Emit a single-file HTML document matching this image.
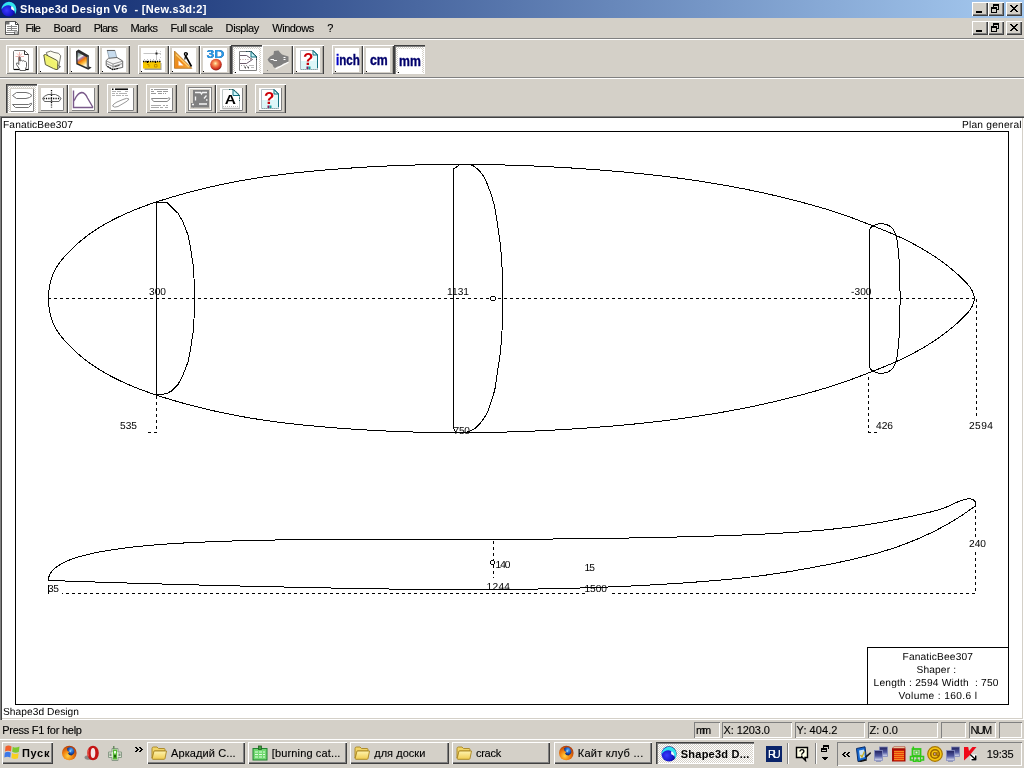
<!DOCTYPE html>
<html lang="en"><head><meta charset="utf-8"><title>Shape3d Design V6 - [New.s3d:2]</title>
<style>
html,body{margin:0;padding:0;background:#d4d0c8;}
body{width:1024px;height:768px;overflow:hidden;font-family:'Liberation Sans',sans-serif;font-size:11px;color:#000;}
#screen{will-change:transform;position:relative;width:1024px;height:768px;overflow:hidden;background:#d4d0c8;}
#screen div,#screen span,#screen svg{position:absolute;box-sizing:border-box;}
.t{white-space:pre;line-height:1;}
.rb{background:#d4d0c8;box-shadow:inset 1px 1px 0 #fff,inset -1px -1px 0 #404040,inset -2px -2px 0 #808080;}
.pb{background:#e9e7e3;box-shadow:inset 1px 1px 0 #404040,inset 2px 2px 0 #808080,inset -1px -1px 0 #fff;}
.dith{background-image:linear-gradient(45deg,#fff 25%,transparent 25%,transparent 75%,#fff 75%),linear-gradient(45deg,#fff 25%,transparent 25%,transparent 75%,#fff 75%);background-size:2px 2px;background-position:0 0,1px 1px;background-color:#d4d0c8;}
.tb{background:#d4d0c8;box-shadow:inset 1px 1px 0 #fff,inset -1px 0 0 #404040,inset 0 -1px 0 #808080,inset -2px 0 0 #a8a59e;}
.sunk{box-shadow:inset 1px 1px 0 #808080,inset -1px -1px 0 #fff;}
.cap{background:#d4d0c8;box-shadow:inset 1px 1px 0 #fff,inset -1px -1px 0 #404040,inset -2px -2px 0 #808080;}
.cl{text-rendering:geometricPrecision;}
.rg{-webkit-text-stroke:0.12px currentColor;}

</style></head>
<body>
<div id="screen">
<div style="left:0px;top:116px;width:1024px;height:604px;background:#fff;box-shadow:inset 1px 1px 0 #808080,inset 2px 2px 0 #404040,inset -1px -1px 0 #fff,inset -2px -2px 0 #d4d0c8;"></div><svg width="1024" height="768" viewBox="0 0 1024 768" style="left:0;top:0" shape-rendering="crispEdges" fill="none" stroke="#000" stroke-width="1"><line x1="48" y1="298.5" x2="976" y2="298.5" stroke-dasharray="3 3"/><line x1="156.5" y1="396" x2="156.5" y2="433" stroke-dasharray="3 3"/><line x1="148" y1="432.5" x2="157" y2="432.5" stroke-dasharray="3 3"/><line x1="868.5" y1="377" x2="868.5" y2="433" stroke-dasharray="3 3"/><line x1="868" y1="432.5" x2="878" y2="432.5" stroke-dasharray="3 3"/><line x1="976.5" y1="299" x2="976.5" y2="418" stroke-dasharray="3 3"/><line x1="48" y1="593.5" x2="976" y2="593.5" stroke-dasharray="3 3"/><line x1="975.5" y1="504" x2="975.5" y2="594" stroke-dasharray="3 3"/><line x1="493.5" y1="541" x2="493.5" y2="578" stroke-dasharray="3 3"/></svg><span class="t cl" style="left:3px;top:121.00px;font-size:10.2px;letter-spacing:0.12px;">FanaticBee307</span><span class="t cl" style="left:962px;top:121.00px;font-size:10.2px;letter-spacing:0.21px;">Plan general</span><span class="t cl" style="left:3px;top:708.00px;font-size:10.2px;letter-spacing:0.05px;">Shape3d Design</span><span class="t cl" style="left:149px;top:288.00px;font-size:10.2px;background:#fff;padding:1px 3px 0 0;margin-top:-1px;height:10px;">300</span><span class="t cl" style="left:447px;top:288.00px;font-size:10.2px;letter-spacing:0.03px;background:#fff;padding:1px 3px 0 0;margin-top:-1px;height:10px;">1131</span><span class="t cl" style="left:851px;top:288.00px;font-size:10.2px;letter-spacing:0.04px;background:#fff;padding:1px 3px 0 0;margin-top:-1px;height:10px;">-300</span><span class="t cl" style="left:120px;top:422.00px;font-size:10.2px;background:#fff;padding:1px 3px 0 0;margin-top:-1px;height:10px;">535</span><span class="t cl" style="left:453.5px;top:427.00px;font-size:10.2px;letter-spacing:-0.25px;background:#fff;padding:1px 3px 0 0;margin-top:-1px;height:10px;">750</span><span class="t cl" style="left:876px;top:422.00px;font-size:10.2px;background:#fff;padding:1px 3px 0 0;margin-top:-1px;height:10px;">426</span><span class="t cl" style="left:969px;top:422.00px;font-size:10.2px;letter-spacing:0.44px;background:#fff;padding:1px 3px 0 0;margin-top:-1px;height:10px;">2594</span><span class="t cl" style="left:48px;top:585.00px;font-size:10.2px;letter-spacing:-0.34px;background:#fff;padding:1px 3px 0 0;margin-top:-1px;height:10px;">35</span><span class="t cl" style="left:495.5px;top:561.00px;font-size:10.2px;letter-spacing:-1px;background:#fff;padding:1px 3px 0 0;margin-top:-1px;height:10px;">140</span><span class="t cl" style="left:486.5px;top:583.00px;font-size:10.2px;letter-spacing:0.28px;background:#fff;padding:1px 3px 0 0;margin-top:-1px;height:10px;">1244</span><span class="t cl" style="left:584.5px;top:564.00px;font-size:10.2px;letter-spacing:-0.84px;background:#fff;padding:1px 3px 0 0;margin-top:-1px;height:10px;">15</span><span class="t cl" style="left:584.5px;top:585.00px;font-size:10.2px;letter-spacing:-0.06px;background:#fff;padding:1px 3px 0 0;margin-top:-1px;height:10px;">1500</span><span class="t cl" style="left:969px;top:540.00px;font-size:10.2px;background:#fff;padding:1px 3px 0 0;margin-top:-1px;height:10px;">240</span><span class="t cl" style="left:902.5px;top:653.00px;font-size:10.2px;letter-spacing:0.16px;">FanaticBee307</span><span class="t cl" style="left:916.5px;top:666.00px;font-size:10.2px;letter-spacing:0.14px;">Shaper :</span><span class="t cl" style="left:873.5px;top:679.00px;font-size:10.2px;letter-spacing:0.22px;">Length : 2594 Width  : 750</span><span class="t cl" style="left:898.5px;top:692.00px;font-size:10.2px;letter-spacing:0.36px;">Volume : 160.6 l</span><svg width="1024" height="768" viewBox="0 0 1024 768" style="left:0;top:0" shape-rendering="crispEdges" fill="none" stroke="#000" stroke-width="1"><rect x="15.500" y="131.500" width="993" height="573"/><path d="M867.500 704.500V647.500H1008.500"/><path d="M48.50 298.53L48.50 298.43L48.50 298.14L48.50 297.64L48.51 296.95L48.54 296.07L48.58 294.98L48.65 293.70L48.77 292.23L48.93 290.56L49.17 288.71L49.48 286.67L49.91 284.46L50.45 282.08L51.15 279.55L52.02 276.87L53.10 274.08L54.41 271.19L55.99 268.23L57.86 265.22L60.02 262.17L62.47 259.09L65.17 255.96L68.09 252.79L71.22 249.58L74.57 246.34L78.15 243.10L81.96 239.89L86.00 236.70L90.28 233.55L94.79 230.44L99.54 227.40L104.53 224.42L109.74 221.51L115.18 218.68L120.83 215.92L126.70 213.26L132.76 210.67L139.01 208.18L145.44 205.76L152.06 203.43L158.85 201.16L165.80 198.96L172.91 196.80L180.16 194.70L187.57 192.66L195.12 190.68L202.81 188.76L210.63 186.91L218.60 185.13L226.69 183.43L234.91 181.80L243.25 180.26L251.71 178.81L260.29 177.44L268.98 176.17L277.77 174.99L286.66 173.89L295.65 172.87L304.72 171.92L313.88 171.03L323.13 170.20L332.44 169.42L341.83 168.69L351.28 168.02L360.80 167.40L370.38 166.83L380.01 166.33L389.69 165.88L399.42 165.49L409.19 165.16L419.00 164.89L428.85 164.67L438.72 164.52L448.62 164.43L458.54 164.39L468.48 164.42L478.44 164.50L488.40 164.64L498.37 164.84L508.34 165.10L518.30 165.41L528.26 165.78L538.21 166.20L548.14 166.68L558.05 167.20L567.93 167.78L577.79 168.41L587.62 169.08L597.41 169.81L607.16 170.58L616.86 171.40L626.52 172.28L636.12 173.21L645.66 174.20L655.14 175.24L664.55 176.35L673.89 177.52L683.15 178.76L692.34 180.05L701.44 181.42L710.45 182.84L719.37 184.33L728.20 185.89L736.92 187.51L745.54 189.19L754.05 190.93L762.45 192.73L770.73 194.58L778.89 196.48L786.93 198.44L794.84 200.44L802.62 202.48L810.26 204.57L817.77 206.70L825.14 208.86L832.36 211.09L839.42 213.38L846.32 215.77L853.05 218.22L859.62 220.71L866.04 223.19L872.30 225.62L878.41 228.02L884.36 230.41L890.15 232.82L895.76 235.27L901.18 237.76L906.43 240.29L911.48 242.86L916.34 245.45L920.99 248.06L925.45 250.68L929.70 253.30L933.76 255.91L937.61 258.52L941.26 261.10L944.71 263.65L947.97 266.17L951.04 268.63L953.91 271.04L956.61 273.39L959.12 275.66L961.45 277.85L963.61 279.96L965.59 281.97L967.36 283.91L968.89 285.77L970.20 287.56L971.29 289.26L972.17 290.86L972.86 292.35L973.39 293.71L973.78 294.94L974.06 296.00L974.25 296.89L974.37 297.60L974.45 298.11L974.49 298.43L974.50 298.53"/><path d="M48.50 298.53L48.50 298.63L48.50 298.92L48.50 299.42L48.51 300.11L48.54 300.99L48.58 302.08L48.65 303.36L48.77 304.83L48.93 306.50L49.17 308.35L49.48 310.39L49.91 312.60L50.45 314.98L51.15 317.51L52.02 320.19L53.10 322.98L54.41 325.87L55.99 328.83L57.86 331.84L60.02 334.89L62.47 337.97L65.17 341.10L68.09 344.27L71.22 347.48L74.57 350.72L78.15 353.96L81.96 357.17L86.00 360.36L90.28 363.51L94.79 366.62L99.54 369.66L104.53 372.64L109.74 375.55L115.18 378.38L120.83 381.14L126.70 383.80L132.76 386.39L139.01 388.88L145.44 391.30L152.06 393.63L158.85 395.90L165.80 398.10L172.91 400.26L180.16 402.36L187.57 404.40L195.12 406.38L202.81 408.30L210.63 410.15L218.60 411.93L226.69 413.63L234.91 415.26L243.25 416.80L251.71 418.25L260.29 419.62L268.98 420.89L277.77 422.07L286.66 423.17L295.65 424.19L304.72 425.14L313.88 426.03L323.13 426.86L332.44 427.64L341.83 428.37L351.28 429.04L360.80 429.66L370.38 430.23L380.01 430.73L389.69 431.18L399.42 431.57L409.19 431.90L419.00 432.17L428.85 432.39L438.72 432.54L448.62 432.63L458.54 432.67L468.48 432.64L478.44 432.56L488.40 432.42L498.37 432.22L508.34 431.96L518.30 431.65L528.26 431.28L538.21 430.86L548.14 430.38L558.05 429.86L567.93 429.28L577.79 428.65L587.62 427.98L597.41 427.25L607.16 426.48L616.86 425.66L626.52 424.78L636.12 423.85L645.66 422.86L655.14 421.82L664.55 420.71L673.89 419.54L683.15 418.30L692.34 417.01L701.44 415.64L710.45 414.22L719.37 412.73L728.20 411.17L736.92 409.55L745.54 407.87L754.05 406.13L762.45 404.33L770.73 402.48L778.89 400.58L786.93 398.62L794.84 396.62L802.62 394.58L810.26 392.49L817.77 390.36L825.14 388.20L832.36 385.97L839.42 383.68L846.32 381.29L853.05 378.84L859.62 376.35L866.04 373.87L872.30 371.44L878.41 369.04L884.36 366.65L890.15 364.24L895.76 361.79L901.18 359.30L906.43 356.77L911.48 354.20L916.34 351.61L920.99 349.00L925.45 346.38L929.70 343.76L933.76 341.15L937.61 338.54L941.26 335.96L944.71 333.41L947.97 330.89L951.04 328.43L953.91 326.02L956.61 323.67L959.12 321.40L961.45 319.21L963.61 317.10L965.59 315.09L967.36 313.15L968.89 311.29L970.20 309.50L971.29 307.80L972.17 306.20L972.86 304.71L973.39 303.35L973.78 302.12L974.06 301.06L974.25 300.17L974.37 299.46L974.45 298.95L974.49 298.63L974.50 298.53"/><line x1="156.5" y1="202" x2="156.5" y2="395"/><line x1="453.5" y1="169" x2="453.5" y2="428"/><line x1="869.5" y1="229" x2="869.5" y2="368"/><path d="M156.50 202.53L166.80 202.53L178.00 213.23L183.00 222.03L188.00 235.03L190.50 247.53L193.00 264.03L194.00 278.03L194.50 298.53"/><path d="M156.50 394.53L162.50 394.33L167.00 393.43L172.00 390.73L178.00 384.53L183.00 375.03L188.00 362.03L190.50 349.53L193.00 333.03L194.00 319.03L194.50 298.53"/><path d="M453.50 169.03L459.80 164.63L471.00 164.83L474.50 166.53L478.50 169.83L482.50 174.53L485.50 179.53L488.00 186.03L491.00 194.03L494.50 205.53L497.00 221.03L499.80 240.03L501.50 257.03L502.30 272.03L502.60 298.53"/><path d="M502.60 298.53L502.30 325.03L501.50 340.03L499.80 357.03L497.00 375.03L494.80 390.03L491.00 402.03L487.20 413.03L483.50 419.03L479.80 423.83L474.80 428.63L469.80 431.23L465.00 432.43"/><path d="M453.500 427.500L455.500 432.400"/><path d="M869.50 229.53L869.58 229.39L869.85 228.98L870.32 228.34L871.03 227.52L872.05 226.60L873.41 225.66L875.15 224.80L877.27 224.12L879.76 223.74L882.53 223.75L885.47 224.25L888.41 225.33L891.09 227.05L893.29 229.44L894.96 232.45L896.15 235.97L896.98 239.84L897.57 243.89L898.05 247.93L898.45 251.93L898.78 255.86L899.04 259.71L899.25 263.46L899.42 267.11L899.55 270.64L899.65 274.04L899.72 277.29L899.79 280.38L899.85 283.29L899.90 286.00L899.95 288.49L899.99 290.74L900.04 292.75L900.08 294.47L900.12 295.91L900.15 297.05L900.18 297.87L900.19 298.36L900.20 298.53"/><path d="M869.50 367.53L869.58 367.67L869.85 368.08L870.32 368.72L871.03 369.54L872.05 370.46L873.41 371.40L875.15 372.26L877.27 372.94L879.76 373.32L882.53 373.31L885.47 372.81L888.41 371.73L891.09 370.01L893.29 367.62L894.96 364.61L896.15 361.09L896.98 357.22L897.57 353.17L898.05 349.13L898.45 345.13L898.78 341.20L899.04 337.35L899.25 333.60L899.42 329.95L899.55 326.42L899.65 323.02L899.72 319.77L899.79 316.68L899.85 313.77L899.90 311.06L899.95 308.57L899.99 306.32L900.04 304.31L900.08 302.59L900.12 301.15L900.15 300.01L900.18 299.19L900.19 298.70L900.20 298.53"/><circle cx="493" cy="298.500" r="2.500" fill="#fff"/><path d="M48.50 580.43L48.50 580.28L48.50 579.83L48.54 579.10L48.66 578.10L48.92 576.87L49.38 575.43L50.12 573.84L51.20 572.12L52.68 570.33L54.59 568.51L56.93 566.69L59.67 564.90L62.72 563.17L66.08 561.51L69.73 559.96L73.69 558.50L77.95 557.13L82.51 555.83L87.36 554.59L92.49 553.41L97.91 552.29L103.60 551.24L109.54 550.24L115.73 549.28L122.16 548.38L128.83 547.52L135.73 546.72L142.85 545.98L150.20 545.29L157.77 544.67L165.55 544.09L173.54 543.57L181.73 543.10L190.12 542.67L198.70 542.27L207.47 541.89L216.42 541.55L225.54 541.23L234.84 540.93L244.30 540.67L253.91 540.43L263.69 540.22L273.60 540.03L283.66 539.87L293.86 539.74L304.18 539.63L314.63 539.54L325.19 539.47L335.87 539.42L346.65 539.39L357.52 539.37L368.49 539.37L379.54 539.37L390.67 539.38L401.88 539.40L413.14 539.41L424.47 539.42L435.84 539.43L447.26 539.43L458.72 539.43L470.20 539.41L481.71 539.39L493.24 539.35L504.78 539.31L516.32 539.25L527.85 539.19L539.38 539.11L550.89 539.02L562.37 538.91L573.82 538.79L585.24 538.66L596.61 538.52L607.93 538.36L619.19 538.18L630.38 537.99L641.50 537.78L652.55 537.56L663.51 537.33L674.38 537.07L685.15 536.81L695.82 536.53L706.37 536.23L716.81 535.91L727.13 535.56L737.32 535.19L747.37 534.79L757.29 534.36L767.06 533.90L776.68 533.39L786.14 532.85L795.43 532.26L804.54 531.61L813.48 530.91L822.23 530.14L830.78 529.31L839.13 528.40L847.27 527.44L855.20 526.40L862.92 525.30L870.41 524.14L877.68 522.93L884.72 521.67L891.54 520.38L898.13 519.08L904.49 517.78L910.62 516.48L916.53 515.20L922.20 513.94L927.63 512.71L932.79 511.45L937.64 510.11L942.15 508.66L946.32 507.07L950.14 505.38L953.71 503.71L957.10 502.18L960.35 500.88L963.48 499.84L966.45 499.10L969.12 498.80L971.35 499.00L973.13 499.66L974.43 500.68L975.24 501.86L975.64 503.04L975.75 504.10L975.71 504.93L975.64 505.45L975.60 505.63"/><path d="M48.50 580.43L48.74 580.44L49.45 580.46L50.63 580.51L52.29 580.57L54.41 580.64L57.01 580.73L60.06 580.84L63.58 580.97L67.56 581.10L72.00 581.26L76.88 581.42L82.21 581.60L87.98 581.79L94.18 581.99L100.81 582.21L107.86 582.43L115.33 582.66L123.20 582.90L131.47 583.14L140.13 583.40L149.17 583.66L158.58 583.92L168.35 584.19L178.48 584.46L188.95 584.74L199.76 585.02L210.88 585.30L222.32 585.58L234.05 585.86L246.07 586.15L258.37 586.44L270.93 586.72L283.74 587.01L296.79 587.30L310.07 587.59L323.56 587.87L337.24 588.14L351.11 588.40L365.15 588.65L379.34 588.87L393.68 589.07L408.14 589.24L422.71 589.38L437.38 589.49L452.13 589.56L466.95 589.58L481.82 589.56L496.73 589.49L511.66 589.36L526.59 589.18L541.51 588.94L556.41 588.63L571.27 588.26L586.08 587.82L600.81 587.30L615.46 586.72L630.01 586.07L644.45 585.34L658.75 584.54L672.92 583.66L686.92 582.71L700.75 581.69L714.40 580.60L727.83 579.40L741.05 578.08L754.02 576.61L766.73 574.98L779.16 573.18L791.31 571.24L803.16 569.20L814.72 567.09L825.97 564.96L836.89 562.78L847.47 560.54L857.68 558.20L867.50 555.76L876.93 553.20L885.95 550.52L894.54 547.74L902.71 544.85L910.44 541.88L917.73 538.88L924.57 535.86L930.96 532.86L936.90 529.90L942.39 527.01L947.43 524.22L952.03 521.54L956.20 519.00L959.94 516.63L963.26 514.44L966.16 512.46L968.66 510.70L970.77 509.18L972.48 507.92L973.80 506.92L974.75 506.21L975.31 505.77L975.50 505.63"/><circle cx="492.500" cy="562.500" r="2" fill="#fff"/><line x1="48.5" y1="585" x2="48.5" y2="594"/></svg><div style="left:0px;top:0px;width:1024px;height:18px;background:linear-gradient(90deg,#0a246a 0%,#a6caf0 100%);"></div><svg width="16" height="16" viewBox="0 0 16 16" style="left:1.4px;top:1px"><defs><radialGradient id="gap" cx="0.350" cy="0.600" r="0.700"><stop offset="0" stop-color="#3a3aff"/><stop offset="0.600" stop-color="#1414c8"/><stop offset="1" stop-color="#0a0a50"/></radialGradient></defs>
<circle cx="8" cy="7.800" r="7.600" fill="url(#gap)"/>
<path d="M0.600 8.500A7.400 7.400 0 0 1 15.400 8C15.300 11 14.800 12 14 13 14 9.500 12.500 6.500 10 5 7 3.500 3 4.500 0.600 8.500z" fill="#30e4ee"/>
<path d="M10.500 5Q13.500 6.500 13.400 10.500 12 8.500 10.500 8.500 9.500 7 10.500 5z" fill="#f4ffff"/></svg><span class="t" style="left:20px;top:3.69px;font-size:11px;font-weight:700;color:#fff;letter-spacing:0.33px;">Shape3d Design V6  - [New.s3d:2]</span><div class="cap" style="left:972px;top:2px;width:16px;height:14px;"><svg width="16" height="14" viewBox="0 0 16 14" style="left:0;top:0" shape-rendering="crispEdges"><path d="M4 9h6v2H4z" fill="#000"/></svg></div><div class="cap" style="left:988px;top:2px;width:16px;height:14px;"><svg width="16" height="14" viewBox="0 0 16 14" style="left:0;top:0" shape-rendering="crispEdges"><path d="M5 2h6v6H9V7h1V4H6v1H5z" fill="#000"/><path d="M3 5h6v6H3zM4 7v3h4V7z" fill="#000" fill-rule="evenodd"/></svg></div><div class="cap" style="left:1006px;top:2px;width:16px;height:14px;"><svg width="16" height="14" viewBox="0 0 16 14" style="left:0;top:0" shape-rendering="crispEdges"><path d="M4 3h2v1h-2zM10 3h2v1h-2zM5 4h2v1h-2zM9 4h2v1h-2zM6 5h4v1h-4zM7 6h2v1h-2zM6 7h4v1h-4zM5 8h2v1h-2zM9 8h2v1h-2zM4 9h2v1h-2zM10 9h2v1h-2z" fill="#000"/></svg></div><div class="cap" style="left:972px;top:21px;width:16px;height:14px;"><svg width="16" height="14" viewBox="0 0 16 14" style="left:0;top:0" shape-rendering="crispEdges"><path d="M4 9h6v2H4z" fill="#000"/></svg></div><div class="cap" style="left:988px;top:21px;width:16px;height:14px;"><svg width="16" height="14" viewBox="0 0 16 14" style="left:0;top:0" shape-rendering="crispEdges"><path d="M5 2h6v6H9V7h1V4H6v1H5z" fill="#000"/><path d="M3 5h6v6H3zM4 7v3h4V7z" fill="#000" fill-rule="evenodd"/></svg></div><div class="cap" style="left:1006px;top:21px;width:16px;height:14px;"><svg width="16" height="14" viewBox="0 0 16 14" style="left:0;top:0" shape-rendering="crispEdges"><path d="M4 3h2v1h-2zM10 3h2v1h-2zM5 4h2v1h-2zM9 4h2v1h-2zM6 5h4v1h-4zM7 6h2v1h-2zM6 7h4v1h-4zM5 8h2v1h-2zM9 8h2v1h-2zM4 9h2v1h-2zM10 9h2v1h-2z" fill="#000"/></svg></div><svg width="14" height="14" viewBox="0 0 14 14" style="left:5px;top:21px"><path d="M0.500 0.500H10.500L13.500 3.500V13.500H0.500z" fill="#fff" stroke="#585858" stroke-width="1"/>
<path d="M10.500 0.500V3.500H13.500" fill="none" stroke="#404040" stroke-width="1"/>
<rect x="1" y="1" width="3.500" height="2.500" fill="#707070"/>
<path d="M2 5.500h10M2 7.500h10M2 9.500h10M1 11.500h9" stroke="#888" stroke-width="1"/><path d="M6.500 4v6" stroke="#888" stroke-width="1"/>
<rect x="9.500" y="11" width="3.500" height="2" fill="#fff" stroke="#585858" stroke-width="0.800"/></svg><span class="t rg" style="left:25.6px;top:22.69px;font-size:11px;letter-spacing:-0.78px;">File</span><span class="t rg" style="left:53.6px;top:22.69px;font-size:11px;letter-spacing:-0.44px;">Board</span><span class="t rg" style="left:93.8px;top:22.69px;font-size:11px;letter-spacing:-0.83px;">Plans</span><span class="t rg" style="left:130.5px;top:22.69px;font-size:11px;letter-spacing:-0.61px;">Marks</span><span class="t rg" style="left:170.6px;top:22.69px;font-size:11px;letter-spacing:-0.45px;">Full scale</span><span class="t rg" style="left:225.6px;top:22.69px;font-size:11px;letter-spacing:-0.41px;">Display</span><span class="t rg" style="left:272.2px;top:22.69px;font-size:11px;letter-spacing:-0.44px;">Windows</span><span class="t rg" style="left:327.2px;top:22.69px;font-size:11px;letter-spacing:-1.82px;">?</span><div style="left:0px;top:38px;width:1024px;height:1px;background:#808080;"></div><div style="left:0px;top:39px;width:1024px;height:1px;background:#fff;"></div><div style="left:0px;top:77px;width:1024px;height:1px;background:#808080;"></div><div style="left:0px;top:78px;width:1024px;height:1px;background:#fff;"></div><div class="tb" style="left:6px;top:45px;width:31px;height:29px;"><div style="left:3px;top:3px;width:24px;height:24px;background:#fff;overflow:hidden"><svg width="24" height="24" viewBox="0 0 24 24" style="left:0;top:0;"><path d="M5.500 2.500H15.500L19.500 6.500V21.500H4.500V3.500z" fill="#fff" stroke="#6a6a6a" stroke-width="0.900"/>
<path d="M15.500 2.500V6.500H19.500" fill="none" stroke="#333" stroke-width="1"/>
<path d="M5 21.500H19.500" stroke="#000" stroke-width="1.200"/>
<path d="M10.500 8L8 5.500M10.500 8L13.200 5.500M10.500 7.500V4M10 8.500L6.500 8.500M11.500 8.500L15 8.500" stroke="#f0b4b0" stroke-width="1" fill="none"/>
<path d="M9.800 9.200Q10.500 8.200 11.300 9.200V13L12.500 12.300 13.500 13 14.700 12.600 15.600 13.400 16.600 13.400 17.500 14.500V18.500L16.500 21V22.500H11L10.500 21 7.500 16.500Q7 15 8.300 14.800L9.800 16.500z" fill="#fff" stroke="#505050" stroke-width="0.900"/>
<path d="M10.500 9V13" stroke="#8a5a50" stroke-width="1.200"/></svg></div></div><div class="tb" style="left:37px;top:45px;width:31px;height:29px;"><div style="left:3px;top:3px;width:24px;height:24px;background:#fff;overflow:hidden"><svg width="24" height="24" viewBox="0 0 24 24" style="left:0;top:0;"><defs><linearGradient id="gop" x1="1" y1="0" x2="0.300" y2="0.800"><stop offset="0" stop-color="#fdfde0"/><stop offset="0.550" stop-color="#f2f46a"/><stop offset="1" stop-color="#eef07a"/></linearGradient></defs>
<path d="M6.300 4.500L10.700 3.100 14 4.400 18.500 5.300 20.700 7.800 19.800 13 18.800 18 8 9z" fill="#fcfcf0" stroke="#6a6a60" stroke-width="0.900"/>
<path d="M19.100 17.500L21 18.400 17.900 21.500z" fill="#606060"/>
<path d="M3.800 7L5.500 6.500 9.100 8.400 16 11.900 17.900 13.400 17.600 21.500 16 21.500 13.500 20.600 5.400 16.600z" fill="url(#gop)" stroke="#5c5c3a" stroke-width="1"/></svg><div style="left:0;top:23px;width:1px;height:1px;background:#000"></div></div></div><div class="tb" style="left:68px;top:45px;width:31px;height:29px;"><div style="left:3px;top:3px;width:24px;height:24px;background:#fff;overflow:hidden"><svg width="24" height="24" viewBox="0 0 24 24" style="left:0;top:0;"><defs><linearGradient id="gsv" x1="0.200" y1="0" x2="0.600" y2="1"><stop offset="0" stop-color="#8890a8"/><stop offset="0.180" stop-color="#a8c0b0"/><stop offset="0.300" stop-color="#f0f0f8"/><stop offset="0.420" stop-color="#a878a0"/><stop offset="0.560" stop-color="#f07808"/><stop offset="0.760" stop-color="#ffc040"/><stop offset="1" stop-color="#fffce8"/></linearGradient></defs>
<path d="M5 3.200L7.600 1.600 17.900 7.400 17.900 18.600 20.700 19.400 17.300 21.700 5.300 16.200z" fill="#2c2c2c"/>
<path d="M6.600 4.200L15.800 9.300V19.200L6.600 15.200z" fill="url(#gsv)"/>
<path d="M16.300 8.800L17.300 8.400V19.900L16.300 19.700z" fill="#8a8a8a"/></svg><div style="left:0;top:23px;width:1px;height:1px;background:#000"></div></div></div><div class="tb" style="left:99px;top:45px;width:31px;height:29px;"><div style="left:3px;top:3px;width:24px;height:24px;background:#fff;overflow:hidden"><svg width="24" height="24" viewBox="0 0 24 24" style="left:0;top:0;"><path d="M5.200 2.400H12.900L14.800 9.700 7.300 10.800z" fill="#c8dcee" stroke="#8a9aa8" stroke-width="0.800"/>
<path d="M5 2.500H12.900" stroke="#606060" stroke-width="1"/>
<path d="M4.200 12.500L6.500 10.300 15 9.500 20.700 13V19.400L10.800 21.600 5.400 18.400 4.200 17.500z" fill="#f6f6f6" stroke="#555" stroke-width="0.900"/>
<path d="M4.500 13L11 16 20.500 13.200M11 16V21.200M4.500 15.500L11 18.500 20.500 15.500" fill="none" stroke="#8a8a8a" stroke-width="0.900"/>
<path d="M12.500 18.800L17.500 17.300" stroke="#555" stroke-width="1.200"/>
<path d="M5.400 18.400L10.800 21.600 16 20.500" stroke="#000" stroke-width="1.200" stroke-dasharray="1.500 1" fill="none"/></svg><div style="left:0;top:23px;width:1px;height:1px;background:#000"></div></div></div><div class="tb" style="left:138px;top:45px;width:31px;height:29px;"><div style="left:3px;top:3px;width:24px;height:24px;background:#fff;overflow:hidden"><svg width="24" height="24" viewBox="0 0 24 24" style="left:0;top:0;"><path d="M2.500 5.500H20M15.500 2V12" stroke="#c4c4c4" stroke-width="1" fill="none"/>
<rect x="14.500" y="4.500" width="2" height="2" fill="#222"/>
<path d="M19.500 3v9" stroke="#ccc" stroke-width="1" stroke-dasharray="1 2"/>
<path d="M3 11.500h17" stroke="#bbb" stroke-width="1" stroke-dasharray="1 2"/>
<rect x="3.500" y="15" width="17" height="7" fill="#a0a0a0"/>
<rect x="2" y="13.500" width="17.500" height="7" fill="#f8c800"/>
<path d="M2 13.500h17.500" stroke="#000" stroke-width="1.400" stroke-dasharray="1.400 0.900"/>
<path d="M6.500 13V15M14.500 13V15" stroke="#000" stroke-width="1.200"/>
<path d="M6 16.500h2v2.500M13.500 16.500h2.500v2.500h-2.500z" stroke="#b88a00" stroke-width="0.900" fill="none"/></svg><div style="left:0;top:23px;width:1px;height:1px;background:#000"></div></div></div><div class="tb" style="left:169px;top:45px;width:31px;height:29px;"><div style="left:3px;top:3px;width:24px;height:24px;background:#fff;overflow:hidden"><svg width="24" height="24" viewBox="0 0 24 24" style="left:0;top:0;"><defs><linearGradient id="gsq" x1="0" y1="0" x2="1" y2="1"><stop offset="0" stop-color="#e0a030"/><stop offset="0.500" stop-color="#f08818"/><stop offset="1" stop-color="#f8b048"/></linearGradient></defs>
<path d="M2.500 3V20.300H19.800z" fill="url(#gsq)" stroke="#b07020" stroke-width="0.800"/>
<path d="M4 6.500L17 19" stroke="#ffd070" stroke-width="1.100"/>
<path d="M6.500 12.500V17.500H11.500z" fill="#fff"/>
<path d="M12 6h4M13.700 6.500V8L19.500 18.500" stroke="#000" stroke-width="1.600" fill="none"/>
<circle cx="13.800" cy="6" r="1.400" fill="#fff" stroke="#000" stroke-width="1.300"/>
<path d="M13.500 8L12.800 11.500" stroke="#000" stroke-width="1.200"/></svg><div style="left:0;top:23px;width:1px;height:1px;background:#000"></div></div></div><div class="tb" style="left:200px;top:45px;width:31px;height:29px;"><div style="left:3px;top:3px;width:24px;height:24px;background:#fff;overflow:hidden"><svg width="24" height="24" viewBox="0 0 24 24" style="left:0;top:0;"><defs><radialGradient id="g3d" cx="0.450" cy="0.400" r="0.600"><stop offset="0" stop-color="#fff0b0"/><stop offset="0.350" stop-color="#f88850"/><stop offset="0.800" stop-color="#d03020"/><stop offset="1" stop-color="#802018"/></radialGradient></defs>
<text x="3.500" y="10" font-family="'Liberation Sans',sans-serif" font-size="11.500" font-weight="700" fill="#2a9ae8" textLength="18" lengthAdjust="spacingAndGlyphs" style="filter:drop-shadow(0.700px 0.800px 0 #10407a)">3D</text>
<circle cx="13" cy="16.600" r="5.800" fill="url(#g3d)"/></svg><div style="left:0;top:23px;width:1px;height:1px;background:#000"></div></div></div><div class="pb dith" style="left:231px;top:45px;width:31px;height:29px;"><div style="left:4px;top:4px;width:24px;height:24px;background:#fff;overflow:hidden"><svg width="24" height="24" viewBox="0 0 24 24" style="left:0;top:0;"><path d="M4.500 2.500H16.500L21.500 7.500V21.500H4.500z" fill="#fff" stroke="#808080" stroke-width="1"/>
<path d="M16 2.500L21.500 8H16z" fill="#c8f4f8" stroke="#107080" stroke-width="1"/>
<path d="M11 2.500h5.500L21.500 7.500V11" fill="none" stroke="#204850" stroke-width="1" stroke-dasharray="1.500 1"/>
<path d="M5 6.500H11.500L17.500 10.500 11.500 14.500H5" fill="none" stroke="#6a5a6a" stroke-width="1"/>
<path d="M5 10.500H17" stroke="#c0a0a0" stroke-width="1" stroke-dasharray="1 1.500"/>
<path d="M6 16.500H13" stroke="#999" stroke-width="1" stroke-dasharray="1 1.500"/>
<path d="M14 16.500h5M16 18.500h3" stroke="#bbb" stroke-width="1"/>
<path d="M9 18h1.500v1.500M12 18h1.500v1.500" stroke="#555" stroke-width="1" fill="none"/></svg><div style="left:0;top:23px;width:1px;height:1px;background:#000"></div></div></div><div class="tb" style="left:262px;top:45px;width:31px;height:29px;"><div style="left:3px;top:3px;width:24px;height:24px;overflow:hidden"><svg width="24" height="24" viewBox="0 0 24 24" style="left:0;top:0;"><path d="M9 3L13.500 2.500 15 4.500 17 6.500 20 7.500 23.500 8.500 23.500 13.500 21.500 14.500 18.500 15.500 16 17.500 12.500 18.500 10 20 8.500 19 7.500 16.500 4 14 2.500 11.500 5 8.500 8.500 6.500z" fill="#808080"/>
<path d="M10.500 21L14 19.200 18.500 16.800 23.500 14.300" stroke="#fff" stroke-width="1.200" fill="none"/>
<path d="M5.500 11.500h3.500M8.500 12.500h3.500M18.500 9.500h2M18.500 11.500h2" stroke="#fff" stroke-width="1.200"/>
<rect x="2" y="22" width="1" height="1" fill="#808080"/></svg></div></div><div class="tb" style="left:293px;top:45px;width:31px;height:29px;"><div style="left:3px;top:3px;width:24px;height:24px;background:#fff;overflow:hidden"><svg width="24" height="24" viewBox="0 0 24 24" style="left:0;top:0;"><g transform="translate(0 0)"><path d="M4.500 2.500H17.500L21.500 6.500V21.500H4.500z" fill="#fff" stroke="#b0bcc4" stroke-width="1"/>
<path d="M5 13H21V21H5z" fill="#dcf6f8"/><path d="M17 7H21V13H17z" fill="#e4fafb"/>
<path d="M5 21.500H21.500" stroke="#8aa" stroke-width="1" stroke-dasharray="1 1"/>
<path d="M17 2.500V7H21.500z" fill="#e0fafc" stroke="#107080" stroke-width="1"/>
<path d="M17 2.500L21.500 7V20" fill="none" stroke="#107080" stroke-width="1"/>
<text x="7" y="17" font-family="'Liberation Sans',sans-serif" font-size="17" font-weight="700" fill="#cc0008">?</text>
<rect x="10.500" y="18.500" width="2" height="2.500" fill="#802060"/><rect x="12.500" y="18.500" width="2" height="2.500" fill="#10a0a0"/></g></svg><div style="left:0;top:23px;width:1px;height:1px;background:#000"></div></div></div><div class="tb" style="left:332px;top:45px;width:31px;height:29px;"><div style="left:3px;top:3px;width:24px;height:24px;background:#fff;overflow:hidden"><div style="left:0;top:23px;width:1px;height:1px;background:#000"></div></div></div><div class="tb" style="left:363px;top:45px;width:31px;height:29px;"><div style="left:3px;top:3px;width:24px;height:24px;background:#fff;overflow:hidden"><div style="left:0;top:23px;width:1px;height:1px;background:#000"></div></div></div><div class="pb dith" style="left:394px;top:45px;width:31px;height:29px;"><div style="left:4px;top:4px;width:24px;height:24px;background:#fff;overflow:hidden"><div style="left:0;top:23px;width:1px;height:1px;background:#000"></div></div></div><span class="t" style="left:335.8px;top:53.15px;font-size:14px;font-weight:700;color:#00006c;transform:scaleX(0.827);transform-origin:0 50%;-webkit-text-stroke:0.35px #00006c;"><span style="position:static;color:#0000c8;-webkit-text-stroke:0.35px #0000c8">i</span>nch</span><span class="t" style="left:369.8px;top:53.15px;font-size:14px;font-weight:700;color:#00006c;transform:scaleX(0.880);transform-origin:0 50%;-webkit-text-stroke:0.35px #00006c;">cm</span><span class="t" style="left:398.8px;top:54.15px;font-size:14px;font-weight:700;color:#00006c;transform:scaleX(0.875);transform-origin:0 50%;-webkit-text-stroke:0.35px #00006c;">mm</span><div class="pb dith" style="left:6px;top:84px;width:31px;height:29px;"><div style="left:4px;top:4px;width:24px;height:24px;background:#fff;overflow:hidden"><svg width="24" height="24" viewBox="0 0 24 24" style="left:0;top:0;"><path d="M2.500 7.500L6.500 4.500H16L19.500 5.500 22 7.500 19.500 9.500 16 10.500H6.500z" fill="none" stroke="#707070" stroke-width="1"/>
<path d="M2.500 16.500H18.500L21.500 15.200 21.500 16.500 18.500 19.500H5.500z" fill="none" stroke="#707070" stroke-width="1"/><path d="M0 0H24V1H1V24H0z" fill="#d4d0c8"/><path d="M23.500 1V23.500H1" fill="none" stroke="#808080" stroke-width="1"/></svg></div></div><div class="tb" style="left:37px;top:84px;width:31px;height:29px;"><div style="left:3px;top:3px;width:24px;height:24px;background:#fff;overflow:hidden"><svg width="24" height="24" viewBox="0 0 24 24" style="left:0;top:0;"><path d="M2.500 11.500Q3.500 9 8 7.500H15.500Q20 9 21 11.500L19 14.500H4.500z" fill="none" stroke="#666" stroke-width="1"/>
<path d="M11.500 3V20.500" stroke="#000" stroke-width="1.300" stroke-dasharray="1.200 1.200"/>
<path d="M3.500 11.500H20.500" stroke="#000" stroke-width="1.300" stroke-dasharray="1.200 1.200"/><path d="M0 0H24V1H1V24H0z" fill="#d4d0c8"/><path d="M23.500 1V23.500H1" fill="none" stroke="#808080" stroke-width="1"/></svg></div></div><div class="tb" style="left:68px;top:84px;width:31px;height:29px;"><div style="left:3px;top:3px;width:24px;height:24px;background:#fff;overflow:hidden"><svg width="24" height="24" viewBox="0 0 24 24" style="left:0;top:0;"><g transform="translate(1 1)"><path d="M1.500 2.500V19.500H21" fill="none" stroke="#7a5a8a" stroke-width="1.400"/>
<path d="M1.500 13Q3 11.500 4 9 6.500 5 9.500 4.500 13 4.500 15.500 10L21 19.500" fill="none" stroke="#7a5a8a" stroke-width="1.400"/></g><path d="M0 0H24V1H1V24H0z" fill="#d4d0c8"/><path d="M23.500 1V23.500H1" fill="none" stroke="#808080" stroke-width="1"/></svg></div></div><div class="tb" style="left:107px;top:84px;width:31px;height:29px;"><div style="left:3px;top:3px;width:24px;height:24px;background:#fff;overflow:hidden"><svg width="24" height="24" viewBox="0 0 24 24" style="left:0;top:0;"><rect x="2" y="1.500" width="1.500" height="1.500" fill="#000"/><path d="M5 2.200H18" stroke="#000" stroke-width="1.500"/>
<path d="M2 4.500h4M7 4.500h4M15 4.500h3M2 6.500h3M6 6.500h2M9 6.500h8M2 8.500h3M6 8.500h5M12 8.500h2M15 8.500h3" stroke="#b4b4b4" stroke-width="1"/>
<path d="M2.500 19Q3 17 7 15L13 12.500Q17 10.500 19 12 18 14 14 16L8 19.500Q4 21 2.500 19z" fill="none" stroke="#999" stroke-width="1"/><path d="M0 0H24V1H1V24H0z" fill="#d4d0c8"/><path d="M23.500 1V23.500H1" fill="none" stroke="#808080" stroke-width="1"/></svg></div></div><div class="tb" style="left:146px;top:84px;width:31px;height:29px;"><div style="left:3px;top:3px;width:24px;height:24px;background:#fff;overflow:hidden"><svg width="24" height="24" viewBox="0 0 24 24" style="left:0;top:0;"><path d="M2 2.500h2M5 2.500h14M2 4.500h3M8 4.500h5M14 4.500h5M2 6.500h5M9 6.500h4M14 6.500h1M16 6.500h1" stroke="#999" stroke-width="1"/>
<path d="M2.500 11.500H18.500Q20 10 21 11.500 20 13.500 18 14.500H5Q3 13.500 2.500 11.500z" fill="none" stroke="#888" stroke-width="1"/>
<path d="M2 18.500h10M14 18.500h2M17 18.500h2M2 20.500h8M11 20.500h3M16 20.500h3" stroke="#aaa" stroke-width="1"/><path d="M0 0H24V1H1V24H0z" fill="#d4d0c8"/><path d="M23.500 1V23.500H1" fill="none" stroke="#808080" stroke-width="1"/></svg></div></div><div class="tb" style="left:185px;top:84px;width:31px;height:29px;"><div style="left:3px;top:3px;width:24px;height:24px;background:#fff;overflow:hidden"><svg width="24" height="24" viewBox="0 0 24 24" style="left:0;top:0;"><rect x="0" y="0" width="24" height="24" fill="#d4d0c8"/>
<rect x="0.500" y="0.500" width="23" height="23" fill="none" stroke="#808080"/>
<rect x="1.500" y="1.500" width="21" height="21" fill="none" stroke="#fff"/>
<rect x="5" y="3" width="16" height="17.500" fill="#808080"/>
<path d="M3 16h3v4.500H3z" fill="#808080"/>
<path d="M7 5.500h5.500l1 1.500 1-1.500H19M7.500 9.500v4M18.500 8.500l-2.500 3M18 13h1.500M4 17.500h2M11 17h8" stroke="#f4f4f4" stroke-width="1.300" fill="none"/></svg></div></div><div class="tb" style="left:216px;top:84px;width:31px;height:29px;"><div style="left:3px;top:3px;width:24px;height:24px;background:#fff;overflow:hidden"><svg width="24" height="24" viewBox="0 0 24 24" style="left:0;top:0;"><path d="M3.500 2.500H14.500L20.500 8V21.500H3.500z" fill="#fff" stroke="#c0c8c8" stroke-width="1"/>
<path d="M14 2.500L20.500 8.500H14z" fill="#d0f8fc" stroke="#107080" stroke-width="1"/>
<path d="M10 2.500h4.500L20.500 8V14" fill="none" stroke="#206060" stroke-width="1" stroke-dasharray="1.500 1"/>
<path d="M4 19.500H20.500" stroke="#bbb" stroke-width="1" stroke-dasharray="1 1"/><path d="M3.500 21.500H21" stroke="#b8b8b8" stroke-width="1.500"/>
<text x="5.800" y="16.800" font-family="'Liberation Sans',sans-serif" font-size="13.500" font-weight="700" fill="#000" textLength="11.200" lengthAdjust="spacingAndGlyphs">A</text><path d="M0 0H24V1H1V24H0z" fill="#d4d0c8"/><path d="M23.500 1V23.500H1" fill="none" stroke="#808080" stroke-width="1"/></svg></div></div><div class="tb" style="left:255px;top:84px;width:31px;height:29px;"><div style="left:3px;top:3px;width:24px;height:24px;background:#fff;overflow:hidden"><svg width="24" height="24" viewBox="0 0 24 24" style="left:0;top:0;"><g transform="translate(-1 0)"><path d="M4.500 2.500H17.500L21.500 6.500V21.500H4.500z" fill="#fff" stroke="#b0bcc4" stroke-width="1"/>
<path d="M5 13H21V21H5z" fill="#dcf6f8"/><path d="M17 7H21V13H17z" fill="#e4fafb"/>
<path d="M5 21.500H21.500" stroke="#8aa" stroke-width="1" stroke-dasharray="1 1"/>
<path d="M17 2.500V7H21.500z" fill="#e0fafc" stroke="#107080" stroke-width="1"/>
<path d="M17 2.500L21.500 7V20" fill="none" stroke="#107080" stroke-width="1"/>
<text x="7" y="17" font-family="'Liberation Sans',sans-serif" font-size="17" font-weight="700" fill="#cc0008">?</text>
<rect x="10.500" y="18.500" width="2" height="2.500" fill="#802060"/><rect x="12.500" y="18.500" width="2" height="2.500" fill="#10a0a0"/></g><path d="M0 0H24V1H1V24H0z" fill="#d4d0c8"/><path d="M23.500 1V23.500H1" fill="none" stroke="#808080" stroke-width="1"/></svg></div></div><span class="t rg" style="left:2.2px;top:724.69px;font-size:11px;letter-spacing:-0.25px;">Press F1 for help</span><div class="sunk" style="left:694px;top:722px;width:26px;height:16px;"></div><span class="t rg" style="left:696px;top:724.69px;font-size:11px;letter-spacing:-3.13px;">mm</span><div class="sunk" style="left:722px;top:722px;width:70px;height:16px;"></div><span class="t rg" style="left:723.6px;top:724.69px;font-size:11px;letter-spacing:-0.09px;">X: 1203.0</span><div class="sunk" style="left:795px;top:722px;width:70px;height:16px;"></div><span class="t rg" style="left:796.6px;top:724.69px;font-size:11px;letter-spacing:0.06px;">Y: 404.2</span><div class="sunk" style="left:868px;top:722px;width:70px;height:16px;"></div><span class="t rg" style="left:869.6px;top:724.69px;font-size:11px;letter-spacing:0.05px;">Z: 0.0</span><div class="sunk" style="left:941px;top:722px;width:25px;height:16px;"></div><div class="sunk" style="left:969px;top:722px;width:27px;height:16px;"></div><span class="t rg" style="left:970.4px;top:724.69px;font-size:11px;letter-spacing:-1.63px;">NUM</span><div class="sunk" style="left:999px;top:722px;width:23px;height:16px;"></div><div style="left:0px;top:738px;width:1024px;height:30px;background:#d4d0c8;"></div><div style="left:0px;top:739px;width:1024px;height:1px;background:#fff;"></div><div class="rb" style="left:2px;top:742px;width:51px;height:22px;"><svg width="17" height="16" viewBox="0 0 17 16" style="left:2px;top:2px"><path d="M1.500 2.500Q4.500 0.500 7.500 2.500L7 7.500Q4 5.800 1 7.500z" fill="#f0602c"/><path d="M8.700 2.700Q11.500 4.500 15.500 2.500L14.800 8Q11.500 9.500 8.200 7.700z" fill="#7cc82c"/><path d="M0.800 8.700Q4 7 6.800 8.700L6.300 13.500Q3.500 12 0.300 13.500z" fill="#3c78e8"/><path d="M8 9Q11 10.800 14.600 9.200L14 14.300Q10.500 15.800 7.500 14z" fill="#f8d020"/></svg></div><span class="t" style="left:22px;top:747.69px;font-size:11px;font-weight:700;letter-spacing:0.67px;">Пуск</span><svg width="16" height="16" viewBox="0 0 16 16" style="left:61px;top:745px"><defs><radialGradient id="gff" cx="0.550" cy="0.350" r="0.600"><stop offset="0" stop-color="#58b8ff"/><stop offset="0.600" stop-color="#1c58c0"/><stop offset="1" stop-color="#102868"/></radialGradient>
<radialGradient id="gfx" cx="0.400" cy="0.700" r="0.700"><stop offset="0" stop-color="#ffd040"/><stop offset="0.500" stop-color="#f08010"/><stop offset="1" stop-color="#b03808"/></radialGradient></defs>
<circle cx="8.300" cy="8" r="7.300" fill="url(#gfx)"/>
<path d="M6 3.500Q8 1.500 11 2.500 13.500 4 13.500 7 13 9.500 10.500 10.500 8 10.500 7 8.500L8.500 7 6.500 6z" fill="url(#gff)"/>
<path d="M9 4.500Q10.500 5.500 10 7.500 9 6.500 8 6.500z" fill="#a0e0ff" opacity="0.800"/></svg><svg width="16" height="16" viewBox="0 0 16 16" style="left:84px;top:745px"><ellipse cx="5.500" cy="12.500" rx="5" ry="2.300" fill="#707070" opacity="0.750"/>
<ellipse cx="9" cy="8" rx="5.800" ry="7.300" fill="#c41414"/>
<ellipse cx="9" cy="8" rx="2.300" ry="5" fill="#f4e8e8"/>
<path d="M4.300 4.500Q3.500 8 4.300 11.500" stroke="#f06858" stroke-width="1" fill="none"/></svg><svg width="16" height="16" viewBox="0 0 16 16" style="left:107px;top:745px"><path d="M5 3.500h6v3.500h3.500v5.500h-3.500v3h-6v-3H1.500v-5.500H5z" fill="#d8ecd0" stroke="#8a9a88" stroke-width="1"/>
<rect x="6" y="1" width="1.500" height="3" fill="#6a8a60"/>
<rect x="6" y="4.500" width="4" height="10" fill="#58b838"/>
<rect x="7" y="6" width="2" height="2.500" fill="#e8ffe0"/><rect x="7" y="10" width="2" height="2.500" fill="#206010"/>
<rect x="2.500" y="8.500" width="2" height="2.500" fill="#888"/><rect x="11.500" y="8.500" width="2" height="2.500" fill="#888"/></svg><svg width="10" height="8" viewBox="0 0 10 8" style="left:134px;top:746px" shape-rendering="crispEdges"><path d="M1 1h2l2 2.5L3 6H1l2-2.500zM5 1h2l2 2.5L7 6H5l2-2.500z" fill="#000"/></svg><div class="rb" style="left:147px;top:742px;width:98px;height:22px;"></div><svg width="16" height="16" viewBox="0 0 16 16" style="left:151px;top:745px"><defs><linearGradient id="gfo" x1="0" y1="0" x2="0" y2="1"><stop offset="0" stop-color="#fff4b0"/><stop offset="1" stop-color="#f0cc50"/></linearGradient></defs>
<path d="M1 3.500Q1 2 2.500 2H6L7.500 3.500H13Q14 3.500 14 4.500V6H3.500L1 13z" fill="#f0d468" stroke="#a88420" stroke-width="0.900"/>
<path d="M3 6H15.500L14 13.500Q13.800 14.300 13 14.300H2Q1 14.300 1.200 13.300z" fill="url(#gfo)" stroke="#a88420" stroke-width="0.900"/></svg><span class="t rg" style="left:171px;top:747.69px;font-size:11px;letter-spacing:0.1px;">Аркадий С...</span><div class="rb" style="left:248px;top:742px;width:99px;height:22px;"></div><svg width="16" height="16" viewBox="0 0 16 16" style="left:252px;top:745px"><rect x="1" y="3.500" width="14" height="11.500" fill="#70d870" stroke="#208030" stroke-width="1"/>
<rect x="6.500" y="1" width="3" height="3.500" fill="#40a040" stroke="#206020" stroke-width="0.800"/>
<path d="M3 7h10M3 9.500h10M3 12h10" stroke="#e0ffe0" stroke-width="1.200" stroke-dasharray="3 1"/></svg><span class="t rg" style="left:271.8px;top:747.69px;font-size:11px;letter-spacing:0.14px;">[burning cat...</span><div class="rb" style="left:350px;top:742px;width:99px;height:22px;"></div><svg width="16" height="16" viewBox="0 0 16 16" style="left:354px;top:745px"><defs><linearGradient id="gfo" x1="0" y1="0" x2="0" y2="1"><stop offset="0" stop-color="#fff4b0"/><stop offset="1" stop-color="#f0cc50"/></linearGradient></defs>
<path d="M1 3.500Q1 2 2.500 2H6L7.500 3.500H13Q14 3.500 14 4.500V6H3.500L1 13z" fill="#f0d468" stroke="#a88420" stroke-width="0.900"/>
<path d="M3 6H15.500L14 13.500Q13.800 14.300 13 14.300H2Q1 14.300 1.200 13.300z" fill="url(#gfo)" stroke="#a88420" stroke-width="0.900"/></svg><span class="t rg" style="left:374.2px;top:747.69px;font-size:11px;letter-spacing:0.04px;">для доски</span><div class="rb" style="left:452px;top:742px;width:98px;height:22px;"></div><svg width="16" height="16" viewBox="0 0 16 16" style="left:456px;top:745px"><defs><linearGradient id="gfo" x1="0" y1="0" x2="0" y2="1"><stop offset="0" stop-color="#fff4b0"/><stop offset="1" stop-color="#f0cc50"/></linearGradient></defs>
<path d="M1 3.500Q1 2 2.500 2H6L7.500 3.500H13Q14 3.500 14 4.500V6H3.500L1 13z" fill="#f0d468" stroke="#a88420" stroke-width="0.900"/>
<path d="M3 6H15.500L14 13.500Q13.800 14.300 13 14.300H2Q1 14.300 1.200 13.300z" fill="url(#gfo)" stroke="#a88420" stroke-width="0.900"/></svg><span class="t rg" style="left:476px;top:747.69px;font-size:11px;letter-spacing:-0.27px;">crack</span><div class="rb" style="left:554px;top:742px;width:98px;height:22px;"></div><svg width="16" height="16" viewBox="0 0 16 16" style="left:558px;top:745px"><defs><radialGradient id="gff" cx="0.550" cy="0.350" r="0.600"><stop offset="0" stop-color="#58b8ff"/><stop offset="0.600" stop-color="#1c58c0"/><stop offset="1" stop-color="#102868"/></radialGradient>
<radialGradient id="gfx" cx="0.400" cy="0.700" r="0.700"><stop offset="0" stop-color="#ffd040"/><stop offset="0.500" stop-color="#f08010"/><stop offset="1" stop-color="#b03808"/></radialGradient></defs>
<circle cx="8.300" cy="8" r="7.300" fill="url(#gfx)"/>
<path d="M6 3.500Q8 1.500 11 2.500 13.500 4 13.500 7 13 9.500 10.500 10.500 8 10.500 7 8.500L8.500 7 6.500 6z" fill="url(#gff)"/>
<path d="M9 4.500Q10.500 5.500 10 7.500 9 6.500 8 6.500z" fill="#a0e0ff" opacity="0.800"/></svg><span class="t rg" style="left:577.8px;top:747.69px;font-size:11px;letter-spacing:0.26px;">Кайт клуб ...</span><div class="pb dith" style="left:656px;top:742px;width:98px;height:22px;"></div><svg width="16" height="16" viewBox="0 0 16 16" style="left:661px;top:746px"><defs><radialGradient id="gap" cx="0.350" cy="0.600" r="0.700"><stop offset="0" stop-color="#3a3aff"/><stop offset="0.600" stop-color="#1414c8"/><stop offset="1" stop-color="#0a0a50"/></radialGradient></defs>
<circle cx="8" cy="7.800" r="7.600" fill="url(#gap)"/>
<path d="M0.600 8.500A7.400 7.400 0 0 1 15.400 8C15.300 11 14.800 12 14 13 14 9.500 12.500 6.500 10 5 7 3.500 3 4.500 0.600 8.500z" fill="#30e4ee"/>
<path d="M10.500 5Q13.500 6.500 13.400 10.500 12 8.500 10.500 8.500 9.500 7 10.500 5z" fill="#f4ffff"/></svg><span class="t" style="left:680.8px;top:748.69px;font-size:11px;font-weight:700;letter-spacing:0.23px;">Shape3d D...</span><div style="left:766px;top:746px;width:16px;height:16px;background:#0a246a;"></div><span class="t rg" style="left:768px;top:748.69px;font-size:11px;color:#fff;letter-spacing:-3.29px;">RU</span><div style="left:787px;top:743px;width:1px;height:21px;background:#808080;"></div><div style="left:788px;top:743px;width:1px;height:21px;background:#fff;"></div><div style="left:815px;top:743px;width:1px;height:21px;background:#808080;"></div><div style="left:816px;top:743px;width:1px;height:21px;background:#fff;"></div><svg width="14" height="16" viewBox="0 0 14 16" style="left:795px;top:746px"><path d="M1.500 1.500h11v10h-2.500l0.500 3-3-3H1.500z" fill="#ffffe8" stroke="#000" stroke-width="1.400"/>
<text x="3.800" y="10.500" font-family="'Liberation Sans',sans-serif" font-size="10.500" font-weight="700" fill="#000">?</text></svg><svg width="10" height="18" viewBox="0 0 10 18" style="left:820px;top:745px" shape-rendering="crispEdges"><path d="M3 0h6v4H8V2H4v1H3zM1 3h6v4H1zM2 5v1h4V5z" fill="#000" fill-rule="evenodd"/><path d="M1.500 12h7L5 15.500z" fill="#000"/></svg><div class="sunk" style="left:837px;top:742px;width:185px;height:24px;"></div><svg width="10" height="8" viewBox="0 0 10 8" style="left:841px;top:751px" shape-rendering="crispEdges"><path d="M3 1h2L3 3.500 5 6H3L1 3.500zM7 1h2L7 3.500 9 6H7L5 3.500z" fill="#000"/></svg><svg width="16" height="16" viewBox="0 0 16 16" style="left:855px;top:746px"><path d="M1.500 2.500L10 0.800 11.500 13 3 15.500z" fill="#1468d0" stroke="#0a2c68" stroke-width="1"/>
<path d="M4 4.500L9 3.500 9.800 11 5 12.500z" fill="#c8e0f4"/>
<path d="M5.500 9L7 11 9.500 5.500" stroke="#c8b020" stroke-width="1.300" fill="none"/>
<path d="M3 15.500L11.500 13 12 14.500 6 16z" fill="#101010"/>
<path d="M10 10.500L15.500 6 16 7.500 11 12z" fill="#181818"/></svg><svg width="16" height="16" viewBox="0 0 16 16" style="left:873px;top:746px"><defs><linearGradient id="gmo" x1="0" y1="0" x2="0" y2="1"><stop offset="0" stop-color="#20205c"/><stop offset="0.550" stop-color="#5058a0"/><stop offset="1" stop-color="#e0e4f4"/></linearGradient></defs>
<rect x="6.500" y="1" width="8" height="9.500" fill="url(#gmo)" stroke="#8088b8" stroke-width="0.800"/>
<rect x="1.500" y="4.500" width="8" height="10" fill="url(#gmo)" stroke="#8890c0" stroke-width="0.800"/>
<path d="M3 15.500h5" stroke="#9098b8" stroke-width="1"/></svg><svg width="16" height="16" viewBox="0 0 16 16" style="left:891px;top:746px"><path d="M1 2.500L3 0.800H14V2.500z" fill="#f8ecc0" stroke="#a01808" stroke-width="0.600"/>
<rect x="1" y="2.500" width="13.500" height="13" fill="#a80c04"/>
<rect x="3" y="4.500" width="10" height="10" fill="#e83c08"/>
<path d="M3.500 5.500h9M3.500 7.500h9M3.500 9.500h9M3.500 11.500h9M3.500 13.500h9" stroke="#ffd838" stroke-width="1" stroke-dasharray="1 1"/></svg><svg width="16" height="16" viewBox="0 0 16 16" style="left:909px;top:746px"><rect x="3.500" y="0.500" width="1.600" height="3" fill="#30c818"/>
<rect x="3.500" y="3" width="8" height="7" fill="none" stroke="#30c818" stroke-width="1.800"/>
<rect x="6" y="5" width="3" height="3" fill="#e8ffe0" stroke="#30c818" stroke-width="1"/>
<path d="M1.500 10.500h13v3.500h-3v1.500h-2.500v-1.500h-2v1.500H4.500v-1.500h-3z" fill="none" stroke="#30c818" stroke-width="1.600"/>
<path d="M4.500 11v3M8 11v3M11.500 11v3" stroke="#30c818" stroke-width="1.200"/></svg><svg width="16" height="16" viewBox="0 0 16 16" style="left:927px;top:746px"><circle cx="8" cy="8" r="7.300" fill="#f4c410" stroke="#a87800" stroke-width="1.200"/>
<circle cx="8" cy="8" r="4.300" fill="none" stroke="#9a6400" stroke-width="1.600"/>
<circle cx="7.800" cy="8" r="1.500" fill="#c0a0b0" stroke="#9a6400" stroke-width="1.200"/>
<path d="M10 6v3.500q1 1 2-0.500" fill="none" stroke="#9a6400" stroke-width="1.200"/></svg><svg width="16" height="16" viewBox="0 0 16 16" style="left:945px;top:746px"><defs><linearGradient id="gmo" x1="0" y1="0" x2="0" y2="1"><stop offset="0" stop-color="#20205c"/><stop offset="0.550" stop-color="#5058a0"/><stop offset="1" stop-color="#e0e4f4"/></linearGradient></defs>
<rect x="6.500" y="1" width="8" height="9.500" fill="url(#gmo)" stroke="#8088b8" stroke-width="0.800"/>
<rect x="1.500" y="4.500" width="8" height="10" fill="url(#gmo)" stroke="#8890c0" stroke-width="0.800"/>
<path d="M3 15.500h5" stroke="#9098b8" stroke-width="1"/></svg><svg width="16" height="16" viewBox="0 0 16 16" style="left:963px;top:746px"><path d="M1 1H5.200L6 5 9.500 1H13.500L6 10 1 14.500z" fill="#f00818"/>
<rect x="7.500" y="8.500" width="6.500" height="6.500" fill="#fff"/>
<path d="M7.500 8L12 12V9.500H13.500V14.500H8.500V13H11L6.800 9z" fill="#000"/></svg><span class="t rg" style="left:986.8px;top:748.69px;font-size:11px;letter-spacing:-0.18px;">19:35</span>
</div>
</body></html>
